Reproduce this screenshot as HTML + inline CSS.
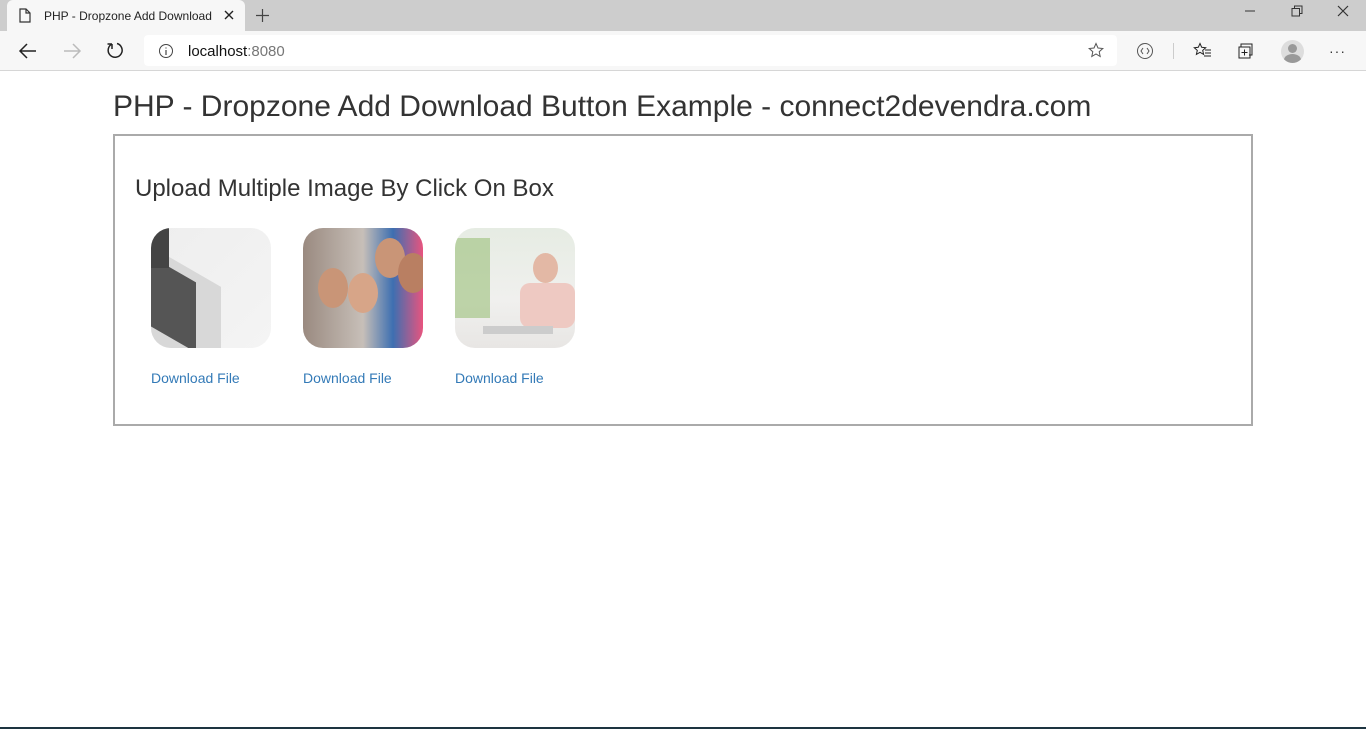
<!DOCTYPE html>
<html><head><meta charset="utf-8"><style>
*{margin:0;padding:0;box-sizing:border-box}
body{width:1366px;height:729px;overflow:hidden;background:#fff;font-family:"Liberation Sans",sans-serif;position:relative}
.tabbar{position:absolute;left:0;top:0;width:1366px;height:31px;background:#cdcdcd}
.tab{position:absolute;left:7px;top:0;width:238px;height:31px;background:#f7f7f7;border-radius:6px 6px 0 0}
.tab .t{position:absolute;left:37px;top:9px;font-size:12px;color:#222;white-space:nowrap;width:172px;overflow:hidden}
.toolbar{position:absolute;left:0;top:31px;width:1366px;height:40px;background:#f7f7f7;border-bottom:1px solid #d6d6d6}
.addr{position:absolute;left:144px;top:4px;width:973px;height:31px;background:#fff;border-radius:4px}
.addr .u{position:absolute;left:44px;top:8px;font-size:15px;color:#111}
.addr .u span{color:#777}
svg{position:absolute}
h1{position:absolute;left:113px;top:90px;font-size:30px;font-weight:normal;color:#333}
.box{position:absolute;left:113px;top:134px;width:1140px;height:292px;border:2px solid #aaa}
h2{position:absolute;left:135px;top:175px;font-size:24px;font-weight:normal;color:#333}
.img{position:absolute;top:228px;width:120px;height:120px;border-radius:20px;overflow:hidden}
.dl{position:absolute;top:370px;font-size:14px;color:#337ab7}
</style></head><body>
<div class="tabbar">
<div class="tab">
<svg style="left:12px;top:8px" width="12" height="15" viewBox="0 0 12 15"><path d="M1 1h6l4 4v9H1z M7 1v4h4" fill="none" stroke="#333" stroke-width="1.2"/></svg>
<div class="t">PHP - Dropzone Add Download Button</div>
<svg style="left:217px;top:10px" width="10" height="10"><path d="M1 1l8 8M9 1l-8 8" stroke="#222" stroke-width="1.4"/></svg>
</div>
<svg style="left:255px;top:8px" width="15" height="15"><path d="M7.5 1v13M1 7.5h13" stroke="#444" stroke-width="1.2"/></svg>
<svg style="left:1245px;top:10px" width="10" height="2"><path d="M0 1h10" stroke="#333"/></svg>
<svg style="left:1291px;top:5px" width="12" height="12"><path d="M1 3.5h7.5v7.5H1zM3.5 3.5V1H11v7.5H8.5" fill="none" stroke="#333"/></svg>
<svg style="left:1337px;top:5px" width="12" height="12"><path d="M1 1l10 10M11 1L1 11" stroke="#333" stroke-width="1.2"/></svg>
</div>
<div class="toolbar">
<svg style="left:18px;top:11px" width="20" height="18"><path d="M18 9H3M9 2L2 9l7 7" fill="none" stroke="#222" stroke-width="1.5"/></svg>
<svg style="left:62px;top:11px" width="20" height="18"><path d="M2 9h15M11 2l7 7-7 7" fill="none" stroke="#bbb" stroke-width="1.5"/></svg>
<svg style="left:106px;top:10px" width="20" height="20"><path d="M6 3A7 7 0 1 0 11 2.5M6 3V8M6 3H1.5" fill="none" stroke="#222" stroke-width="1.5"/></svg>
<div class="addr">
<svg style="left:14px;top:8px" width="16" height="16"><circle cx="8" cy="8" r="6.5" fill="none" stroke="#444"/><path d="M8 7v5M8 4.5v1" stroke="#444" stroke-width="1.2"/></svg>
<div class="u">localhost<span>:8080</span></div>
<svg style="left:944px;top:7px" width="18" height="18"><path d="M8 1.5l2 4.5 4.8.5-3.6 3.2 1 4.8L8 12 3.8 14.5l1-4.8L1.2 6.5 6 6z" fill="none" stroke="#555"/></svg>
</div>
<svg style="left:1136px;top:11px" width="18" height="18"><circle cx="9" cy="9" r="7.5" fill="none" stroke="#555"/><path d="M7 6L5 9l2 3M11 6l2 3-2 3" fill="none" stroke="#555"/></svg>
<div style="position:absolute;left:1173px;top:12px;width:1px;height:16px;background:#ccc"></div>
<svg style="left:1193px;top:11px" width="20" height="18"><path d="M7 1.5l1.7 3.8 4 .4-3 2.7.9 4L7 10.3 3.4 12.4l.9-4-3-2.7 4-.4z" fill="none" stroke="#222"/><path d="M12 8h6M12 11h6M11 14h7" stroke="#222"/></svg>
<svg style="left:1238px;top:11px" width="18" height="18"><path d="M3 5V2h11v11h-3" fill="none" stroke="#222"/><path d="M1 5h11v11H1zM6.5 7.5v6M3.5 10.5h6" fill="none" stroke="#222"/></svg>
<div style="position:absolute;left:1281px;top:9px;width:23px;height:23px;border-radius:50%;background:#ddd;overflow:hidden"><div style="position:absolute;left:7px;top:4px;width:9px;height:9px;border-radius:50%;background:#999"></div><div style="position:absolute;left:3px;top:14px;width:17px;height:12px;border-radius:50%;background:#999"></div></div>
<div style="position:absolute;left:1329px;top:12px;font-size:14px;color:#333;letter-spacing:1px">···</div>
</div>
<h1>PHP - Dropzone Add Download Button Example - connect2devendra.com</h1>
<div class="box"></div>
<h2>Upload Multiple Image By Click On Box</h2>
<div class="img" style="left:151px;background:linear-gradient(135deg,#eee,#f4f4f4)">
<div style="position:absolute;left:-30px;top:30px;width:100px;height:110px;background:#d8d8d8;transform:skewY(30deg)"></div>
<div style="position:absolute;left:-5px;top:40px;width:50px;height:70px;background:#555;transform:skewY(30deg)"></div>
<div style="position:absolute;left:0;top:0;width:18px;height:40px;background:#444"></div>
</div>
<div class="img" style="left:303px;background:linear-gradient(90deg,#9a8a80,#c7bfb8 50%,#3d6fb1 75%,#e8547e)">
<div style="position:absolute;left:15px;top:40px;width:30px;height:40px;border-radius:50%;background:#c99577"></div>
<div style="position:absolute;left:45px;top:45px;width:30px;height:40px;border-radius:50%;background:#d7a588"></div>
<div style="position:absolute;left:72px;top:10px;width:30px;height:40px;border-radius:50%;background:#c99577"></div>
<div style="position:absolute;left:95px;top:25px;width:30px;height:40px;border-radius:50%;background:#b97f62"></div>
</div>
<div class="img" style="left:455px;background:linear-gradient(180deg,#e6ece3,#f0f0ee 60%,#e8e6e4)">
<div style="position:absolute;left:0;top:10px;width:35px;height:80px;background:#9bbf7a;opacity:.6"></div>
<div style="position:absolute;left:65px;top:55px;width:55px;height:45px;border-radius:10px;background:#eec9c2"></div>
<div style="position:absolute;left:78px;top:25px;width:25px;height:30px;border-radius:50%;background:#e3b8a5"></div>
<div style="position:absolute;left:28px;top:98px;width:70px;height:8px;background:#ccc"></div>
</div>
<div class="dl" style="left:151px">Download File</div>
<div class="dl" style="left:303px">Download File</div>
<div class="dl" style="left:455px">Download File</div>
<div style="position:absolute;left:0;top:727px;width:1366px;height:2px;background:#1d3440"></div>
</body></html>
